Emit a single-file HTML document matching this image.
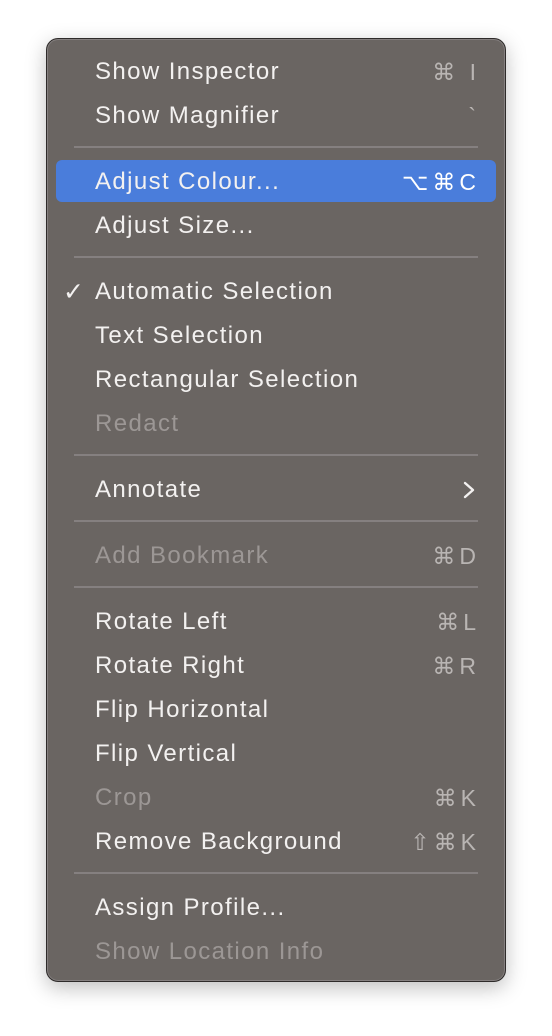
<!DOCTYPE html>
<html><head><meta charset="utf-8"><style>
html,body{margin:0;padding:0;background:#fff;width:552px;height:1036px;overflow:hidden}
.menu{position:absolute;left:46px;top:38px;width:458px;height:942px;border-radius:12px;background:#6a6562;border:1px solid #2e2b2a;box-shadow:inset 0 0 0 1px #858080,0 6px 20px rgba(0,0,0,.25)}
.r{position:absolute;left:0;width:552px;height:40px;line-height:42px;font-family:"Liberation Sans",sans-serif;font-size:24px;letter-spacing:1.4px;color:#f3f1f0}
.r .t{position:absolute;left:95px}
.r .k{position:absolute;right:76px;color:#b9b5b3;font-size:23px;letter-spacing:4px;margin-right:-4px}
.d .t{color:#9c9795}
.sep{position:absolute;left:74px;width:404px;height:2px;background:#858080}
.hl{position:absolute;left:56px;top:160px;width:440px;height:42px;border-radius:6px;background:#4a7ddb}
.chk{position:absolute;left:63px;font-size:25px}
</style></head><body>
<div class="menu"></div>
<div class="hl"></div>
<div class="r" style="top:51px"><span class="t">Show Inspector</span><span class="k">⌘ I</span></div>
<div class="r" style="top:95px"><span class="t">Show Magnifier</span><span class="k">`</span></div>
<div class="sep" style="top:146px"></div>
<div class="r" style="top:161px"><span class="t">Adjust Colour...</span><span class="k" style="color:#fff">⌥⌘C</span></div>
<div class="r" style="top:205px"><span class="t">Adjust Size...</span></div>
<div class="sep" style="top:256px"></div>
<div class="r" style="top:271px"><span class="chk">✓</span><span class="t">Automatic Selection</span></div>
<div class="r" style="top:315px"><span class="t">Text Selection</span></div>
<div class="r" style="top:359px"><span class="t">Rectangular Selection</span></div>
<div class="r d" style="top:403px"><span class="t">Redact</span></div>
<div class="sep" style="top:454px"></div>
<div class="r" style="top:469px"><span class="t">Annotate</span><svg style="position:absolute;left:462px;top:12px" width="14" height="18" viewBox="0 0 14 18"><path d="M3 2 L11 9 L3 16" fill="none" stroke="#f3f1f0" stroke-width="2.4" stroke-linecap="round" stroke-linejoin="round"/></svg></div>
<div class="sep" style="top:520px"></div>
<div class="r d" style="top:535px"><span class="t">Add Bookmark</span><span class="k">⌘D</span></div>
<div class="sep" style="top:586px"></div>
<div class="r" style="top:601px"><span class="t">Rotate Left</span><span class="k">⌘L</span></div>
<div class="r" style="top:645px"><span class="t">Rotate Right</span><span class="k">⌘R</span></div>
<div class="r" style="top:689px"><span class="t">Flip Horizontal</span></div>
<div class="r" style="top:733px"><span class="t">Flip Vertical</span></div>
<div class="r d" style="top:777px"><span class="t">Crop</span><span class="k">⌘K</span></div>
<div class="r" style="top:821px"><span class="t">Remove Background</span><span class="k">⇧⌘K</span></div>
<div class="sep" style="top:872px"></div>
<div class="r" style="top:887px"><span class="t">Assign Profile...</span></div>
<div class="r d" style="top:931px"><span class="t">Show Location Info</span></div>
</body></html>
